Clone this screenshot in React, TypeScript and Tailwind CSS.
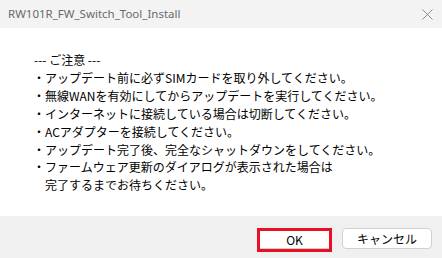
import React from 'react';

const lines = [
  '・アップデート前に必ずSIMカードを取り外してください。',
  '・無線WANを有効にしてからアップデートを実行してください。',
  '・インターネットに接続している場合は切断してください。',
  '・ACアダプターを接続してください。',
  '・アップデート完了後、完全なシャットダウンをしてください。',
  '・ファームウェア更新のダイアログが表示された場合は',
];

const jp = "font-['Noto_Sans_CJK_JP',sans-serif]";

export default function App() {
  return (
    <div className="flex h-[258px] w-[442px] flex-col bg-white">
      {/* title bar */}
      <div className="flex h-[28px] shrink-0 items-center justify-between bg-[#f3f3f3] pl-[8px] pr-[9px]">
        <span className="font-['Noto_Sans',sans-serif] text-[11.5px] text-[#6a6a6a]">
          RW101R_FW_Switch_Tool_Install
        </span>
        <svg width="11" height="11" viewBox="0 0 11 11" className="text-[#8a8a8a]" aria-hidden>
          <path d="M0.5 0.5 L10.5 10.5 M10.5 0.5 L0.5 10.5" stroke="currentColor" strokeWidth="1" />
        </svg>
      </div>

      {/* message */}
      <div className={`flex-1 pl-[34px] pt-[23px] text-[12px] leading-[17.9px] text-black ${jp}`}>
        <p>--- ご注意 ---</p>
        {lines.map((l) => (
          <p key={l} className="-ml-[1px]">
            {l}
          </p>
        ))}
        <p className="pl-[11px]">完了するまでお待ちください。</p>
      </div>

      {/* footer */}
      <div className="flex h-[42px] shrink-0 items-start justify-end gap-[10px] bg-[#f0f0f0] pr-[10px] pt-[12px]">
        <div className="border-[3px] border-[#e81123]">
          <button
            className={`flex h-[18px] w-[69px] items-center justify-center bg-white text-[12px] font-normal text-black shadow-[inset_0_-1px_0_#cfcfcf] ${jp}`}
          >
            OK
          </button>
        </div>
        <button
          className={`flex h-[21px] w-[90px] items-center justify-center rounded-[4px] border border-[#d0d0d0] bg-white text-[12px] text-black ${jp}`}
        >
          キャンセル
        </button>
      </div>
    </div>
  );
}
